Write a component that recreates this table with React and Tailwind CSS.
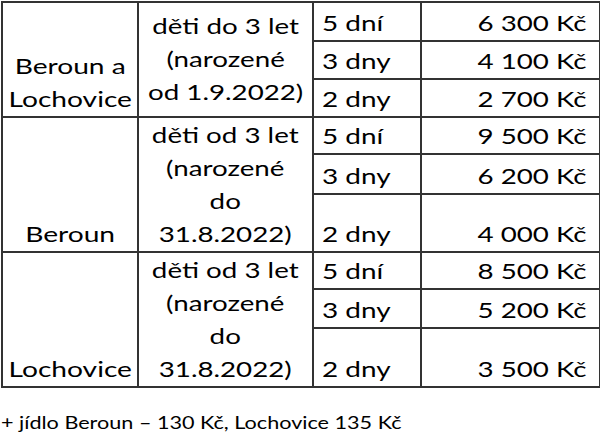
import React from 'react'

const GROUPS = [
  {
    place: ['Beroun a', 'Lochovice'],
    age: ['děti do 3 let', '(narozené', 'od 1.9.2022)'],
    agePad: 'pb-[8px]',
    rows: [
      { days: '5 dní', price: '6 300 Kč', h: 'h-[39px]' },
      { days: '3 dny', price: '4 100 Kč', h: 'h-[38px]' },
      { days: '2 dny', price: '2 700 Kč', h: 'h-[38px]' },
    ],
  },
  {
    place: ['Beroun'],
    age: ['děti od 3 let', '(narozené', 'do', '31.8.2022)'],
    agePad: 'pb-px',
    rows: [
      { days: '5 dní', price: '9 500 Kč', h: 'h-[37px]' },
      { days: '3 dny', price: '6 200 Kč', h: 'h-[39px]' },
      { days: '2 dny', price: '4 000 Kč', h: 'h-[58px]' },
    ],
  },
  {
    place: ['Lochovice'],
    age: ['děti od 3 let', '(narozené', 'do', '31.8.2022)'],
    agePad: 'pb-px',
    rows: [
      { days: '5 dní', price: '8 500 Kč', h: 'h-[37px]' },
      { days: '3 dny', price: '5 200 Kč', h: 'h-[39px]' },
      { days: '2 dny', price: '3 500 Kč', h: 'h-[59px]' },
    ],
  },
]

const cell = 'border-2 border-[#333] align-bottom p-0'

export default function App() {
  return (
    <div className="w-[600px] h-[435px] overflow-hidden bg-white text-black pt-px pl-px font-['Lato','Liberation_Sans',sans-serif]">
      <table className="border-collapse w-[598px] table-fixed text-[22px] leading-[33px]">
        <colgroup>
          <col className="w-[136px]" />
          <col className="w-[175px]" />
          <col className="w-[108px]" />
          <col className="w-[179px]" />
        </colgroup>
        <tbody>
          {GROUPS.map((g, gi) =>
            g.rows.map((r, ri) => (
              <tr key={`${gi}-${ri}`} className={r.h}>
                {ri === 0 && (
                  <>
                    <td rowSpan={3} className={`${cell} text-center pb-px`}>
                      <div className="inline-block scale-x-[1.28] origin-center">
                        {g.place.map(l => <div key={l}>{l}</div>)}
                      </div>
                    </td>
                    <td rowSpan={3} className={`${cell} text-center ${g.agePad}`}>
                      <div className="inline-block scale-x-[1.26] origin-center">
                        {g.age.map(l => <div key={l}>{l}</div>)}
                      </div>
                    </td>
                  </>
                )}
                <td className={`${cell} pl-2 pb-px`}>
                  <span className="inline-block scale-x-[1.27] origin-left">{r.days}</span>
                </td>
                <td className={`${cell} text-right pr-3 pb-px`}>
                  <span className="inline-block scale-x-[1.26] origin-right">{r.price}</span>
                </td>
              </tr>
            ))
          )}
        </tbody>
      </table>
      <p className="mt-[22px] text-[18px] leading-[24px]">
        <span className="inline-block scale-x-[1.2] origin-left">+ jídlo Beroun – 130 Kč, Lochovice 135 Kč</span>
      </p>
    </div>
  )
}
